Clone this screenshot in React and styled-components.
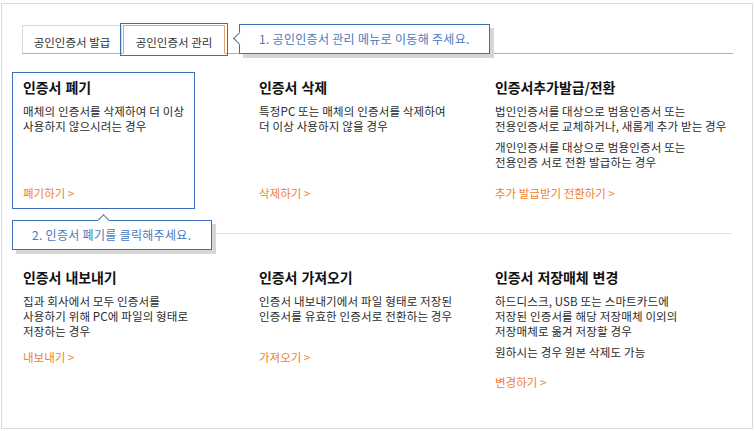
import React from "react";
import styled, { createGlobalStyle } from "styled-components";

const GlobalStyle = createGlobalStyle`
  body {
    margin: 0;
    background: #fff;
    font-family: "Noto Sans CJK KR", "Noto Sans", sans-serif;
  }
`;

const BLUE = "#3d6db2";
const ORANGE_LINE = "#f0a064";

const Frame = styled.div`
  margin: 3px 0 0 1px;
  width: 752px;
  height: 426px;
  box-sizing: border-box;
  border: 1px solid #dadada;
  background: #fff;
`;

const TabBar = styled.div`
  position: relative;
  display: flex;
  align-items: flex-end;
  margin: 21px 19px 0 20px;
  border-bottom: 1px solid ${ORANGE_LINE};
`;

const Tab = styled.div`
  position: relative;
  box-sizing: border-box;
  width: ${(p) => p.$w}px;
  height: ${(p) => (p.$active ? 29 : 28)}px;
  margin-right: 1px;
  margin-bottom: ${(p) => (p.$active ? -1 : 0)}px;
  padding-top: 8px;
  border: 1px solid ${(p) => (p.$active ? ORANGE_LINE : "#d6d6d6")};
  border-bottom: ${(p) => (p.$active ? "1px solid #fff" : "none")};
  background: #fff;
  color: #333;
  font-size: 11.5px;
  line-height: 16px;
  text-align: center;
  white-space: nowrap;
`;

const ActiveMark = styled.span`
  position: absolute;
  left: -4px;
  top: -3px;
  width: 108px;
  height: 33px;
  box-sizing: border-box;
  border: 1px solid ${BLUE};
  pointer-events: none;
`;

const Callout = styled.div`
  position: absolute;
  z-index: 2;
  left: ${(p) => p.$left}px;
  top: ${(p) => p.$top}px;
  width: ${(p) => p.$w}px;
  height: 30px;
  box-sizing: border-box;
  padding-left: 19px;
  border: 1px solid ${BLUE};
  background: #fff;
  box-shadow: 4px 4px 0 #d6d6d6;
  color: #4679c0;
  font-size: 12px;
  line-height: 28px;
  letter-spacing: 0.3px;
  white-space: nowrap;

  &::before {
    content: "";
    position: absolute;
    width: 9px;
    height: 9px;
    box-sizing: border-box;
    background: #fff;
    border-left: 1px solid ${BLUE};
    ${(p) =>
      p.$arrow === "left"
        ? `left: -5px; top: 9px; border-bottom: 1px solid ${BLUE};`
        : `left: ${p.$arrowX}px; top: -5px; border-top: 1px solid ${BLUE};`}
    transform: rotate(45deg);
  }
`;

const Row = styled.div`
  display: grid;
  grid-template-columns: repeat(3, 236px);
  align-items: ${(p) => (p.$stretch ? "stretch" : "start")};
  margin: ${(p) => p.$top}px 0 0 10px;
`;

const Cell = styled.div`
  position: relative;
  display: flex;
  flex-direction: column;
  padding: 6px 11px 8px;
`;

const Highlight = styled.span`
  position: absolute;
  left: 0;
  top: 0;
  bottom: 0;
  width: 183px;
  box-sizing: border-box;
  border: 1px solid ${BLUE};
  pointer-events: none;
`;

const Title = styled.h3`
  margin: 0;
  color: #111;
  font-size: 14px;
  font-weight: 700;
  line-height: 18px;
  letter-spacing: -0.1px;
  word-spacing: 1px;
  white-space: nowrap;
`;

const Body = styled.div`
  margin-top: 8px;
  min-height: 45px;
`;

const Para = styled.p`
  margin: 0;
  color: #2b2b2b;
  font-size: 11.5px;
  line-height: 15px;
  letter-spacing: 0.15px;
  white-space: nowrap;

  & + & {
    margin-top: 6px;
  }
`;

const MoreLink = styled.a`
  margin-top: auto;
  padding-top: ${(p) => p.$gap}px;
  color: #ef7f31;
  font-size: 11.5px;
  line-height: 15px;
  text-decoration: none;
  white-space: nowrap;
`;

const Divider = styled.div`
  margin: 24px 20px 0 10px;
  height: 1px;
  background: #e2e2e2;
`;

const topRow = [
  {
    title: "인증서 폐기",
    paras: [["매체의 인증서를 삭제하여 더 이상", "사용하지 않으시려는 경우"]],
    link: "폐기하기",
    gap: 16,
    focus: true,
  },
  {
    title: "인증서 삭제",
    paras: [["특정PC 또는 매체의 인증서를 삭제하여", "더 이상 사용하지 않을 경우"]],
    link: "삭제하기",
    gap: 16,
  },
  {
    title: "인증서추가발급/전환",
    paras: [
      ["법인인증서를 대상으로 범용인증서 또는", "전용인증서로 교체하거나, 새롭게 추가 받는 경우"],
      ["개인인증서를 대상으로 범용인증서 또는", "전용인증 서로 전환 발급하는 경우"],
    ],
    link: "추가 발급받기 전환하기",
    gap: 16,
  },
];

const bottomRow = [
  {
    title: "인증서 내보내기",
    paras: [["집과 회사에서 모두 인증서를", "사용하기 위해 PC에 파일의 형태로", "저장하는 경우"]],
    link: "내보내기",
    gap: 11,
  },
  {
    title: "인증서 가져오기",
    paras: [["인증서 내보내기에서 파일 형태로 저장된", "인증서를 유효한 인증서로 전환하는 경우"]],
    link: "가져오기",
    gap: 11,
  },
  {
    title: "인증서 저장매체 변경",
    paras: [
      ["하드디스크, USB 또는 스마트카드에", "저장된 인증서를 해당 저장매체 이외의", "저장매체로 옮겨 저장할 경우"],
      ["원하시는 경우 원본 삭제도 가능"],
    ],
    link: "변경하기",
    gap: 15,
  },
];

const Item = ({ item }) => (
  <Cell>
    {item.focus && (
      <>
        <Highlight />
        <Callout $left={0} $top={148} $w={200} $arrow="up" $arrowX={86}>
          2. 인증서 폐기를 클릭해주세요.
        </Callout>
      </>
    )}
    <Title>{item.title}</Title>
    <Body>
      {item.paras.map((lines, i) => (
        <Para key={i}>
          {lines.map((line, j) => (
            <React.Fragment key={j}>
              {j > 0 && <br />}
              {line}
            </React.Fragment>
          ))}
        </Para>
      ))}
    </Body>
    <MoreLink href="#" $gap={item.gap}>
      {item.link} &gt;
    </MoreLink>
  </Cell>
);

const App = () => (
  <>
    <GlobalStyle />
    <Frame>
      <TabBar>
        <Tab $w={100}>공인인증서 발급</Tab>
        <Tab $w={102} $active>
          공인인증서 관리
          <ActiveMark />
        </Tab>
        <Callout $left={217} $top={-1} $w={251} $arrow="left">
          1. 공인인증서 관리 메뉴로 이동해 주세요.
        </Callout>
      </TabBar>
      <Row $top={18} $stretch>
        {topRow.map((item) => (
          <Item key={item.title} item={item} />
        ))}
      </Row>
      <Divider />
      <Row $top={28}>
        {bottomRow.map((item) => (
          <Item key={item.title} item={item} />
        ))}
      </Row>
    </Frame>
  </>
);

export default App;
